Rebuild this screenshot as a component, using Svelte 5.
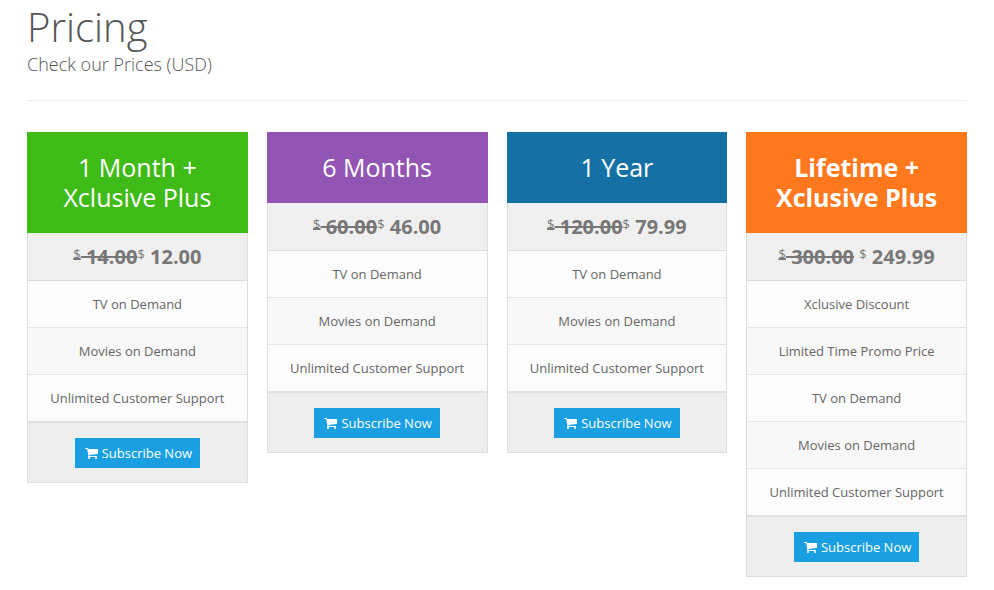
<script>
  const plans = [
    {
      title: ['1 Month +', 'Xclusive Plus'],
      color: '#3fbb17',
      oldPrice: '14.00',
      price: '12.00',
      features: ['TV on Demand', 'Movies on Demand', 'Unlimited Customer Support']
    },
    {
      title: ['6 Months'],
      color: '#9355b4',
      oldPrice: '60.00',
      price: '46.00',
      features: ['TV on Demand', 'Movies on Demand', 'Unlimited Customer Support']
    },
    {
      title: ['1 Year'],
      color: '#1570a6',
      oldPrice: '120.00',
      price: '79.99',
      features: ['TV on Demand', 'Movies on Demand', 'Unlimited Customer Support']
    },
    {
      title: ['Lifetime +', 'Xclusive Plus'],
      color: '#ff781e',
      bold: true,
      spaced: true,
      oldPrice: '300.00',
      price: '249.99',
      features: [
        'Xclusive Discount',
        'Limited Time Promo Price',
        'TV on Demand',
        'Movies on Demand',
        'Unlimited Customer Support'
      ]
    }
  ];
</script>

<div class="page">
  <header class="head">
    <h1>Pricing</h1>
    <p>Check our Prices (USD)</p>
  </header>

  <div class="plans">
    {#each plans as plan}
      <div class="plan">
        <div class="title" class:bold={plan.bold} style="background: {plan.color}">
          {#each plan.title as line}
            <div>{line}</div>
          {/each}
        </div>
        <div class="price">
          <del><sup>$</sup> {plan.oldPrice}</del>{#if plan.spaced}&nbsp;{/if}<sup>$</sup>{' '}{plan.price}
        </div>
        <ul>
          {#each plan.features as feature}
            <li>{feature}</li>
          {/each}
        </ul>
        <div class="foot">
          <button>
            <svg viewBox="0 0 1664 1792" width="13" height="14" aria-hidden="true">
              <path fill="currentColor" d="M640 1536q0 52-38 90t-90 38-90-38-38-90 38-90 90-38 90 38 38 90zm896 0q0 52-38 90t-90 38-90-38-38-90 38-90 90-38 90 38 38 90zm128-1088v512q0 24-16.500 42.500t-40.500 21.500l-1044 122q13 60 13 70 0 16-24 64h920q26 0 45 19t19 45-19 45-45 19h-1024q-26 0-45-19t-19-45q0-11 8-31.500t16-36 21.500-40 15.500-29.500l-177-823h-204q-26 0-45-19t-19-45 19-45 45-19h256q16 0 28.500 6.500t19.500 15.500 13 24.500 8 26 5.500 29.500 4.500 26h1201q26 0 45 19t19 45z"/>
            </svg>
            Subscribe Now
          </button>
        </div>
      </div>
    {/each}
  </div>
</div>

<style>
  :global(body) {
    margin: 0;
    background: #fff;
    font-family: "Open Sans", sans-serif;
    color: #555;
  }

  .page {
    padding: 0 27px;
  }

  .head {
    border-bottom: 1px solid #eee;
    height: 100px;
  }

  h1 {
    margin: 0;
    padding-top: 3px;
    font-size: 40px;
    line-height: 48px;
    font-weight: 300;
    color: #555;
  }

  .head p {
    margin: 0;
    font-size: 18px;
    line-height: 26px;
    font-weight: 300;
    color: #555;
  }

  .plans {
    display: grid;
    grid-template-columns: repeat(4, 1fr);
    column-gap: 19px;
    align-items: start;
    margin-top: 31px;
  }

  .title {
    padding: 20px 10px 21px;
    text-align: center;
    color: #fff;
    font-size: 25px;
    line-height: 30px;
  }

  .title.bold {
    font-weight: 700;
  }

  .price {
    background: #f0f0f0;
    border: 1px solid #ddd;
    border-top: 0;
    height: 47px;
    line-height: 47px;
    text-align: center;
    font-size: 20px;
    font-weight: 700;
    color: #777;
    white-space: nowrap;
  }

  sup {
    font-size: 13px;
    font-weight: 400;
    line-height: 0;
    vertical-align: 5px;
  }

  ul {
    margin: 0;
    padding: 0;
    list-style: none;
    border-left: 1px solid #ddd;
    border-right: 1px solid #ddd;
  }

  li {
    height: 46px;
    line-height: 46px;
    border-bottom: 1px solid #e5e5e5;
    text-align: center;
    font-size: 13px;
    color: #666;
    background: #fcfcfc;
  }

  li:nth-child(even) {
    background: #f8f8f8;
  }

  li:last-child {
    border-bottom: 2px solid #e0e0e0;
  }

  .foot {
    background: #eee;
    border: 1px solid #ddd;
    border-top: 0;
    height: 59px;
    display: flex;
    align-items: center;
    justify-content: center;
  }

  button {
    display: flex;
    align-items: center;
    gap: 4px;
    height: 30px;
    padding: 0 8px 0 10px;
    border: 0;
    background: #1a9fe3;
    color: #fff;
    font-family: inherit;
    font-size: 13px;
    cursor: pointer;
  }
</style>
